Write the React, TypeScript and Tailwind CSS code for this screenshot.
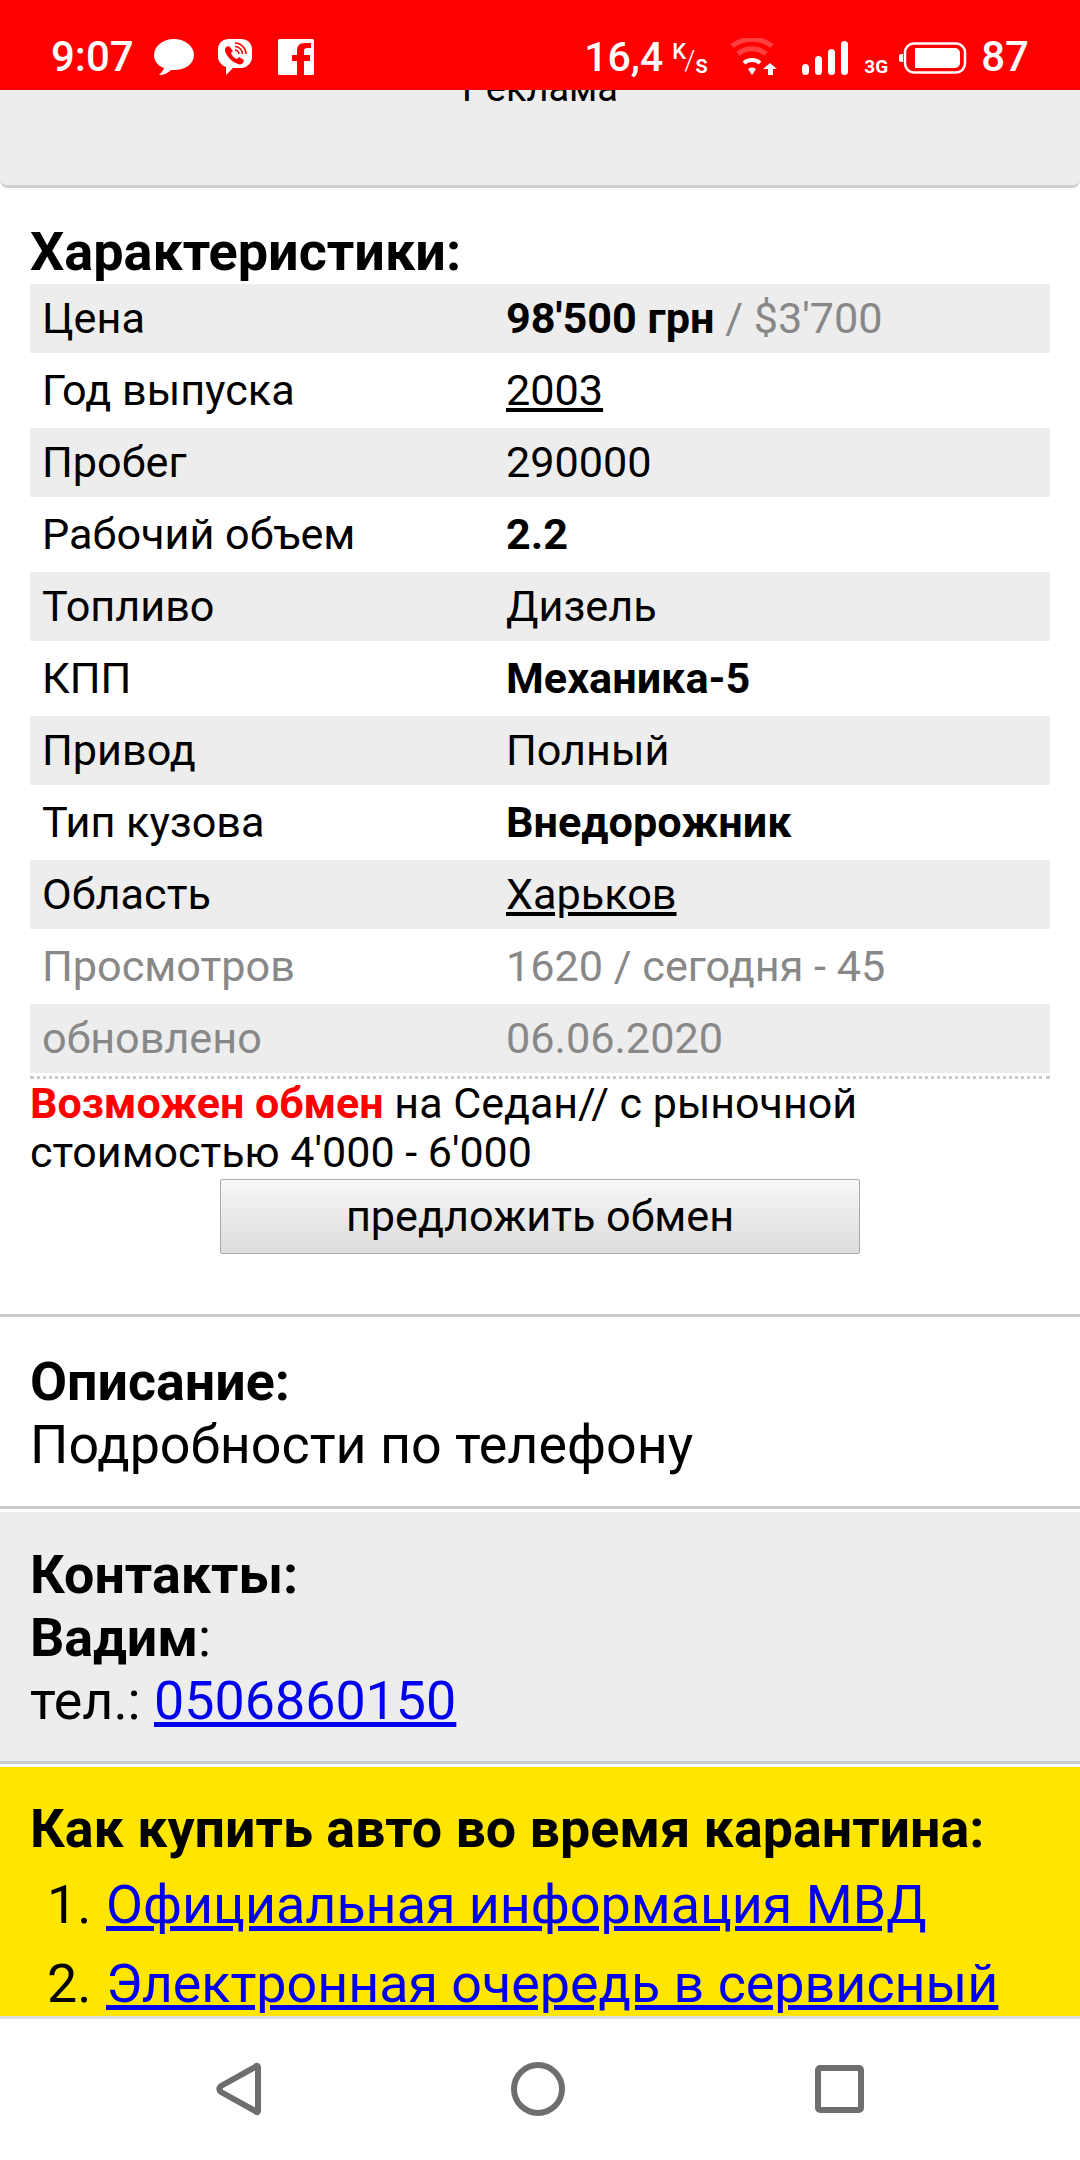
const rows: { label: string; value: React.ReactNode; muted?: boolean }[] = [
	{
		label: "Цена",
		value: (
			<>
				<b>98'500 грн</b> <span className="text-[#888]">/ $3'700</span>
			</>
		),
	},
	{ label: "Год выпуска", value: <u>2003</u> },
	{ label: "Пробег", value: "290000" },
	{ label: "Рабочий объем", value: <b>2.2</b> },
	{ label: "Топливо", value: "Дизель" },
	{ label: "КПП", value: <b>Механика-5</b> },
	{ label: "Привод", value: "Полный" },
	{ label: "Тип кузова", value: <b>Внедорожник</b> },
	{ label: "Область", value: <u>Харьков</u> },
	{ label: "Просмотров", value: "1620 / сегодня - 45", muted: true },
	{ label: "обновлено", value: "06.06.2020", muted: true },
];

function StatusBar() {
	return (
		<div className="h-[90px] shrink-0 bg-[#ff0000] text-white relative z-10 flex items-end justify-between pb-[15px] pl-[51px] pr-[51px] font-medium">
			<div className="flex items-end">
				<span className="text-[42px] leading-[36px]">9:07</span>
				{/* message */}
				<svg className="ml-[20px]" width="40" height="36" viewBox="0 0 40 36" fill="#fff">
					<path d="M20 0C9 0 0 7 0 16c0 6 4 11 10 13-1 3-3 5-5 7 5 0 9-2 12-5 1 0 2 0 3 0 11 0 20-6 20-15S31 0 20 0z" />
				</svg>
				{/* viber */}
				<svg className="ml-[24px]" width="34" height="36" viewBox="0 0 34 36">
					<path
						fill="#fff"
						d="M11 0h12c6 0 11 4 11 10v8c0 6-5 11-11 11h-8l-7 7v-8C3 26 0 22 0 18v-8C0 4 5 0 11 0z"
					/>
					<path
						fill="#ff0000"
						d="M8 8l3-1 4 5-2 2c1 3 3 5 6 6l2-2 5 3-1 3c-1 1-3 2-5 1-6-2-11-7-13-13 0-2 0-3 1-4z"
					/>
					<path
						fill="none"
						stroke="#ff0000"
						strokeWidth="1.500"
						d="M17 4c6 0 11 5 11 11M17 7.500c4 0 7.500 3.500 7.500 7.500M17 11c2 0 4 2 4 4"
					/>
				</svg>
				{/* facebook */}
				<svg className="ml-[26px]" width="36" height="36" viewBox="0 0 36 36">
					<rect width="36" height="36" rx="1.500" fill="#fff" />
					<path
						fill="#ff0000"
						d="M26 36V22h6v-6h-6v-4c0-2 1-3 3-3h4V4h-6c-6 0-8 3-8 8v4h-5v6h5v14z"
					/>
				</svg>
			</div>
			<div className="flex items-end">
				<span className="text-[41px] leading-[36px]">16,4</span>
				<span className="relative w-[38px] h-[34px] ml-[9px] leading-none">
					<span className="absolute left-0 top-0 text-[22px]">K</span>
					<span className="absolute left-[12px] top-[6px] text-[28px] font-light">/</span>
					<span className="absolute left-[23px] top-[11px] text-[25px]">s</span>
				</span>
				{/* wifi with up arrow */}
				<svg className="ml-[20px]" width="47" height="37" viewBox="0 0 47 37">
					<path d="M2 8C13 -1 31 -1 42 8" fill="none" stroke="#fff" strokeOpacity=".25" strokeWidth="5" />
					<path d="M8 16C16 9 28 9 36 16" fill="none" stroke="#fff" strokeOpacity=".25" strokeWidth="5" />
					<path d="M14 25C18 21 26 21 30 25" fill="none" stroke="#fff" strokeWidth="4" />
					<path d="M18 31c3-2 5-2 8 0l-4 6z" fill="#fff" />
					<path d="M40 25l7 6h-4v6h-5v-6h-5z" fill="#fff" />
				</svg>
				{/* signal */}
				<svg className="ml-[25px]" width="46" height="34" viewBox="0 0 46 34" fill="#fff">
					<rect x="0" y="23" width="7" height="11" rx="3.500" />
					<rect x="13" y="15" width="7" height="19" rx="3.500" />
					<rect x="26" y="8" width="7" height="26" rx="3.500" />
					<rect x="39" y="0" width="7" height="34" rx="3.500" />
				</svg>
				<span className="ml-[16px] text-[19px] leading-[16px] font-bold w-[24px]">3G</span>
				{/* battery */}
				<svg className="ml-[11px] mb-[1px]" width="68" height="32" viewBox="0 0 68 32">
					<path d="M3 12h1v8H3a4 4 0 0 1 0-8z" fill="#fff" />
					<rect x="6" y="1.500" width="60" height="29" rx="9" fill="none" stroke="#fff" strokeWidth="2.500" />
					<path d="M16 6h40a5 5 0 0 1 5 5v10a5 5 0 0 1-5 5H16z" fill="#fff" />
				</svg>
				<span className="ml-[14px] text-[42px] leading-[36px]">87</span>
			</div>
		</div>
	);
}

export default function App() {
	return (
		<div className="h-[2160px] w-[1080px] flex flex-col overflow-hidden bg-white text-black font-['Roboto',sans-serif]">
			<StatusBar />

			<div className="flex-1 min-h-0 flex flex-col overflow-hidden">
				{/* Ad block */}
				<div className="h-[98px] shrink-0 overflow-hidden bg-[#ededed] border-b-[3px] border-[#cdd0d0] rounded-b-[8px] text-center">
					<div className="-mt-[24px] text-[38px] leading-[44px]">Реклама</div>
				</div>

				{/* Specs */}
				<div className="px-[30px] pt-[36px] shrink-0">
					<h2 className="text-[54px] leading-[56px] font-bold">Характеристики:</h2>
					<div className="mt-[4px] flex flex-col gap-[3px]">
						{rows.map((row, i) => (
							<div
								key={row.label}
								className={`h-[69px] pt-[2px] flex items-center text-[43.2px] ${i % 2 === 0 ? "bg-[#ededed]" : ""} ${row.muted ? "text-[#888]" : ""}`}
							>
								<div className="w-[476px] pl-[12px]">{row.label}</div>
								<div>{row.value}</div>
							</div>
						))}
					</div>
					<div className="mt-[3px] border-b-[3px] border-dotted border-[#ccc]" />
					<p className="text-[43px] leading-[49px]">
						<b className="text-[#ff0000]">Возможен обмен</b> на Седан// с рыночной
						<br />
						стоимостью 4'000 - 6'000
					</p>
					<button className="block mx-auto mt-[2px] w-[640px] h-[75px] pt-[1px] border border-[#aaa] rounded-[2px] bg-linear-to-b from-[#f7f7f7] to-[#dcdcdc] text-[43.2px]">
						предложить обмен
					</button>
				</div>

				<div className="mt-[60px] mb-[3px] shrink-0 border-y-[3px] border-[#c8cccc] px-[30px] pt-[33px] h-[195px] text-[53.8px] leading-[63px]">
					<h2 className="font-bold">Описание:</h2>
					<p>Подробности по телефону</p>
				</div>

				<div className="mb-[3px] shrink-0 border-b-[3px] border-[#c8cccc] bg-[#ededed] px-[30px] pt-[31px] h-[252px] text-[53.8px] leading-[63px]">
					<h2 className="font-bold">Контакты:</h2>
					<p>
						<b>Вадим</b>:
					</p>
					<p>
						тел.: <a className="text-[#0000ee] underline">0506860150</a>
					</p>
				</div>

				<div className="flex-1 min-h-0 overflow-hidden bg-[#ffe600] px-[30px] pt-[30px]">
					<h2 className="text-[53.8px] leading-[63px] font-bold">Как купить авто во время карантина:</h2>
					<ol className="mt-[5px] text-[53.8px] leading-[79px]">
						<li className="flex">
							<span className="w-[76px] pl-[17px]">1.</span>
							<a className="text-[#0000ee] underline">Официальная информация МВД</a>
						</li>
						<li className="flex">
							<span className="w-[76px] pl-[17px]">2.</span>
							<a className="text-[#0000ee] underline">Электронная очередь в сервисный</a>
						</li>
					</ol>
				</div>
			</div>

			{/* Android nav bar */}
			<div className="h-[144px] shrink-0 border-t-[3px] border-[#e0e0e0] bg-white flex items-center justify-center gap-[250px] pb-[2px] text-[#6e6e6e]">
				<svg width="45" height="54" viewBox="0 0 45 54" fill="none" stroke="currentColor" strokeWidth="6" strokeLinejoin="round">
					<path d="M42 6v42q0 4-3 1L5 30q-3-3 0-6L39 5q3-3 3 1z" />
				</svg>
				<svg width="54" height="54" viewBox="0 0 54 54" fill="none" stroke="currentColor" strokeWidth="6">
					<circle cx="27" cy="27" r="24" />
				</svg>
				<svg width="49" height="48" viewBox="0 0 49 48" fill="none" stroke="currentColor" strokeWidth="6" strokeLinejoin="round">
					<rect x="3" y="3" width="43" height="42" rx="2" />
				</svg>
			</div>
		</div>
	);
}
